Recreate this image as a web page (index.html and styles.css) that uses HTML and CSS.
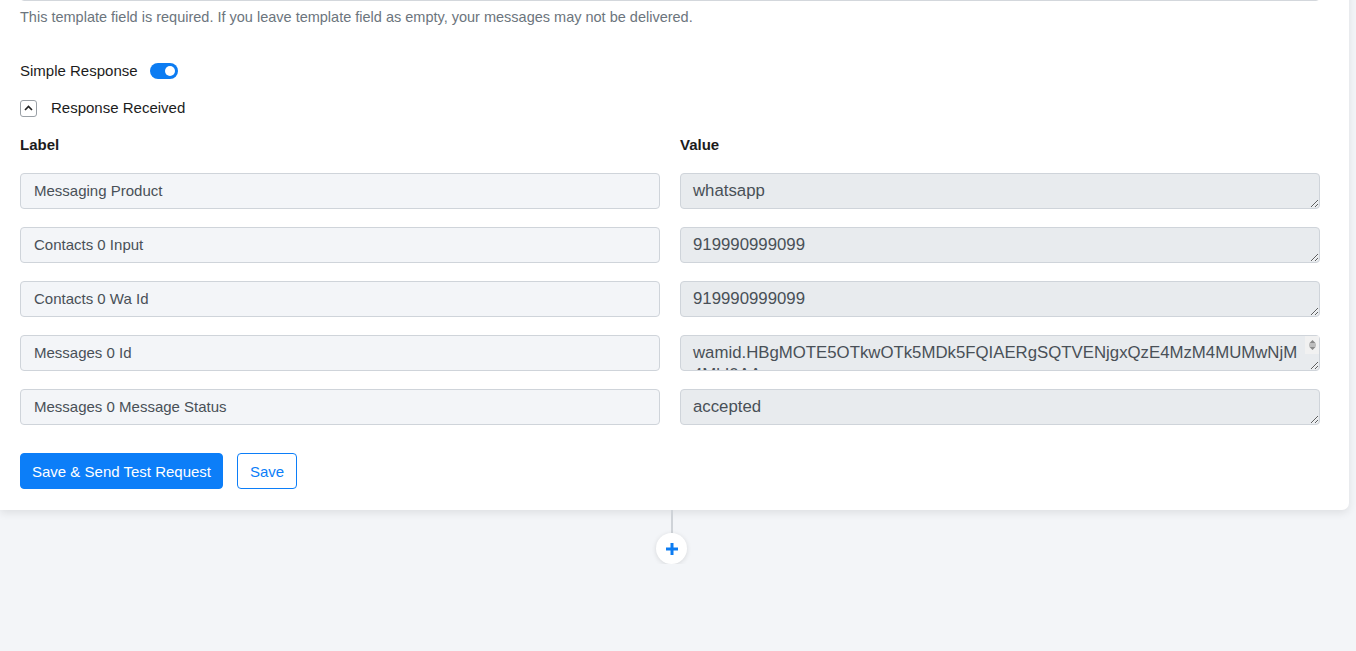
FILE: index.html
```html
<!DOCTYPE html>
<html lang="en">
<head>
  <meta charset="UTF-8" />
  <meta name="viewport" content="width=device-width, initial-scale=1.0"/>
  <title>Send Template Message</title>
  <link rel="stylesheet" href="styles.css">
</head>
<body>

  <!-- Action step card -->
  <div class="step-card">
    <div class="template-field"></div>
    <p class="help-text">This template field is required. If you leave template field as empty, your messages may not be delivered.</p>

    <div class="switch-row">
      <span>Simple Response</span>
      <span class="switch"><span class="knob"></span></span>
    </div>

    <div class="collapse-row">
      <span class="collapse-btn">
        <svg width="9" height="6" viewBox="0 0 9 6"><path d="M1 5 L4.5 1.5 L8 5" fill="none" stroke="#222" stroke-width="1.6"/></svg>
      </span>
      <span>Response Received</span>
    </div>

    <div class="response-grid">
      <div class="col-head">Label</div>
      <div class="col-head">Value</div>

      <div class="label-box">Messaging Product</div>
      <textarea class="value-box" rows="1" readonly>whatsapp</textarea>

      <div class="label-box">Contacts 0 Input</div>
      <textarea class="value-box" rows="1" readonly>919990999099</textarea>

      <div class="label-box">Contacts 0 Wa Id</div>
      <textarea class="value-box" rows="1" readonly>919990999099</textarea>

      <div class="label-box">Messages 0 Id</div>
      <div class="value-wrap">
        <textarea class="value-box long" rows="1" readonly>wamid.HBgMOTE5OTkwOTk5MDk5FQIAERgSQTVENjgxQzE4MzM4MUMwNjM4MkI0AA==</textarea>
        <span class="spin">
          <svg width="9" height="12" viewBox="0 0 9 12"><path d="M1 4.5 L4.5 1 L8 4.5 Z M1 7.5 L4.5 11 L8 7.5 Z" fill="#8a8a8a"/><path d="M1 6 H8" stroke="#8a8a8a" stroke-width="1"/></svg>
        </span>
      </div>

      <div class="label-box">Messages 0 Message Status</div>
      <textarea class="value-box" rows="1" readonly>accepted</textarea>
    </div>

    <div class="actions">
      <button class="btn btn-primary">Save &amp; Send Test Request</button>
      <button class="btn btn-outline">Save</button>
    </div>
  </div>

  <!-- Add step connector -->
  <div class="connector">
    <span class="line"></span>
    <button class="add-step">
      <svg width="14" height="14" viewBox="0 0 14 14"><path d="M7 1 V13 M1 7 H13" stroke="#0c7cf2" stroke-width="3"/></svg>
    </button>
  </div>

</body>
</html>
```

FILE: styles.css
```css
body {
  margin: 0;
  font-family: 'Liberation Sans', Arial, sans-serif;
  background-color: #f3f5f8;
  color: #1c1c1c;
  overflow: hidden;
}

.step-card {
  width: 1349px;
  box-sizing: border-box;
  background: white;
  padding: 0 29px 21px 20px;
  border-bottom-right-radius: 7px;
  box-shadow: 0 3px 8px rgba(0,0,0,0.09);
}

.template-field {
  height: 36px;
  margin-top: -35px;
  border: 1px solid #d3d7dc;
  border-radius: 4px;
  box-sizing: border-box;
}

.help-text {
  margin: 6px 0 0;
  font-size: 14.5px;
  color: #6c757d;
  line-height: 20px;
}

.switch-row {
  display: flex;
  align-items: center;
  gap: 12px;
  margin-top: 34px;
  font-size: 15px;
  line-height: 20px;
}

.switch {
  width: 28px;
  height: 16px;
  border-radius: 8px;
  background: #0c7cf2;
  position: relative;
}

.switch .knob {
  position: absolute;
  top: 3px;
  right: 3px;
  width: 10px;
  height: 10px;
  border-radius: 50%;
  background: white;
}

.collapse-row {
  display: flex;
  align-items: center;
  gap: 14px;
  margin-top: 17px;
  font-size: 15px;
  line-height: 20px;
}

.collapse-btn {
  width: 15px;
  height: 15px;
  border: 1px solid #9aa0a6;
  border-radius: 3px;
  display: flex;
  align-items: center;
  justify-content: center;
}

.response-grid {
  display: grid;
  grid-template-columns: 1fr 1fr;
  column-gap: 20px;
  row-gap: 18px;
  margin-top: 17px;
}

.col-head {
  font-weight: bold;
  font-size: 15px;
  line-height: 20px;
}

.label-box,
.value-box {
  height: 36px;
  box-sizing: border-box;
  border: 1px solid #cfd4da;
  border-radius: 4px;
  padding: 7px 13px;
  font-family: inherit;
  font-size: 15px;
  line-height: 20px;
  color: #495057;
}

.label-box {
  background: #f3f5f8;
}

.value-box {
  display: block;
  width: 100%;
  background: #e8ebee;
  font-size: 16.8px;
  line-height: 22px;
  padding: 6px 12px;
  margin: 0;
  resize: vertical;
  overflow: hidden;
}

.value-wrap {
  position: relative;
}

.value-box.long {
  padding-right: 17px;
}

/* fake scroll arrows of the overflowing value */
.spin {
  position: absolute;
  top: 1px;
  right: 1px;
  width: 14px;
  height: 18px;
  display: flex;
  justify-content: center;
  align-items: center;
  background: #f1f1f1;
}

.actions {
  display: flex;
  gap: 14px;
  margin-top: 28px;
}

.btn {
  height: 36px;
  padding: 0 11px;
  border-radius: 4px;
  font-family: inherit;
  font-size: 15px;
  cursor: pointer;
}

.btn-primary {
  background: #0c7ef8;
  border: 1px solid #0c7ef8;
  color: white;
}

.btn-outline {
  background: white;
  border: 1px solid #0c7ef8;
  color: #0c7ef8;
  padding: 0 12px;
}

.connector {
  width: 1349px;
  display: flex;
  flex-direction: column;
  align-items: center;
  margin-left: -3px;
}

.connector .line {
  width: 2px;
  height: 23px;
  background: #cfd3d8;
}

.add-step {
  width: 31px;
  height: 31px;
  border-radius: 50%;
  border: none;
  background: white;
  box-shadow: 0 1px 5px rgba(0,0,0,0.12);
  display: flex;
  align-items: center;
  justify-content: center;
  padding: 0;
}
```
